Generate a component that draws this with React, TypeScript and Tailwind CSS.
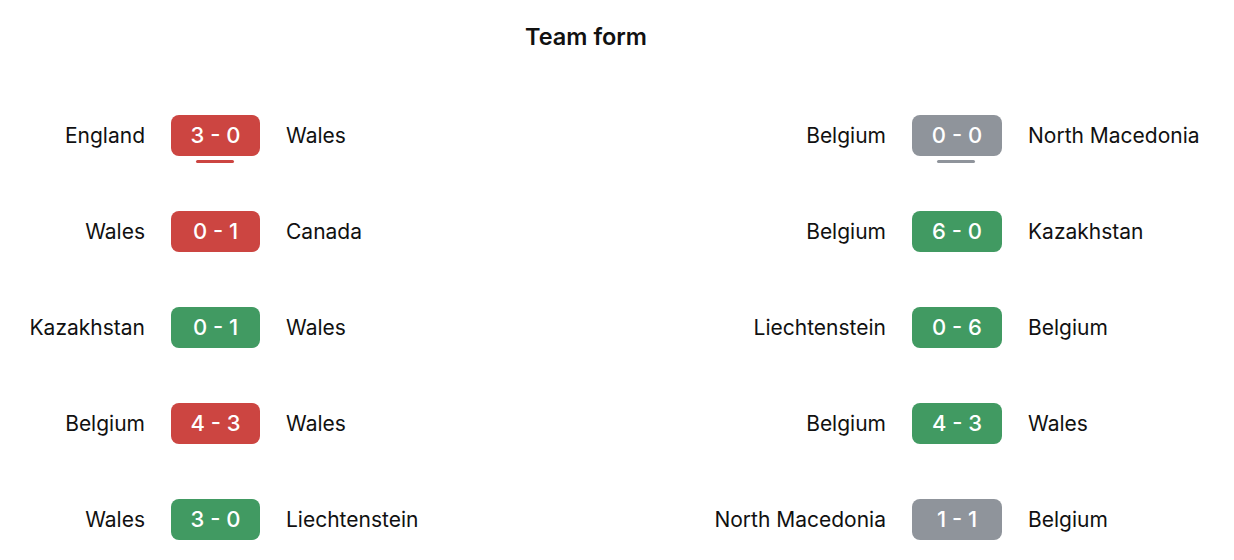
import React from "react";

type Res = "L" | "W" | "D";
type Match = { home: string; score: string; away: string; res: Res };

const left: Match[] = [
  { home: "England", score: "3 - 0", away: "Wales", res: "L" },
  { home: "Wales", score: "0 - 1", away: "Canada", res: "L" },
  { home: "Kazakhstan", score: "0 - 1", away: "Wales", res: "W" },
  { home: "Belgium", score: "4 - 3", away: "Wales", res: "L" },
  { home: "Wales", score: "3 - 0", away: "Liechtenstein", res: "W" },
];

const right: Match[] = [
  { home: "Belgium", score: "0 - 0", away: "North Macedonia", res: "D" },
  { home: "Belgium", score: "6 - 0", away: "Kazakhstan", res: "W" },
  { home: "Liechtenstein", score: "0 - 6", away: "Belgium", res: "W" },
  { home: "Belgium", score: "4 - 3", away: "Wales", res: "W" },
  { home: "North Macedonia", score: "1 - 1", away: "Belgium", res: "D" },
];

const bg: Record<Res, string> = {
  L: "bg-[#cc4541]",
  W: "bg-[#419a62]",
  D: "bg-[#8f949b]",
};

function Row({ m, nameW, badgeW, first }: { m: Match; nameW: string; badgeW: string; first: boolean }) {
  return (
    <div className="flex h-[96px] items-center">
      <div className={`${nameW} shrink-0 pt-[2px] text-right`}>{m.home}</div>
      <div className="relative ml-[26px] shrink-0">
        <div
          className={`${bg[m.res]} ${badgeW} flex h-[41px] items-center justify-center rounded-[8px] pt-[1px] text-[22px] font-medium text-white`}
        >
          {m.score}
        </div>
        {first && (
          <div
            className={`${bg[m.res]} absolute left-[25px] top-[45px] h-[3px] w-[38px] rounded-full`}
          />
        )}
      </div>
      <div className="ml-[26px] whitespace-nowrap pt-[2px]">{m.away}</div>
    </div>
  );
}

export default function App() {
  return (
    <div
      className="h-[560px] w-[1234px] overflow-hidden bg-white text-[21px] text-[#111111]"
      style={{ fontFamily: "Inter, 'Noto Sans', sans-serif" }}
    >
      <div className="flex h-[74px] w-[1172px] items-center justify-center text-[23.5px] font-semibold">
        Team form
      </div>
      <div className="mt-[13px] flex">
        <div className="w-[586px] shrink-0">
          {left.map((m, i) => (
            <Row key={i} m={m} nameW="w-[145px]" badgeW="w-[89px]" first={i === 0} />
          ))}
        </div>
        <div className="shrink-0">
          {right.map((m, i) => (
            <Row key={i} m={m} nameW="w-[300px]" badgeW="w-[90px]" first={i === 0} />
          ))}
        </div>
      </div>
    </div>
  );
}
